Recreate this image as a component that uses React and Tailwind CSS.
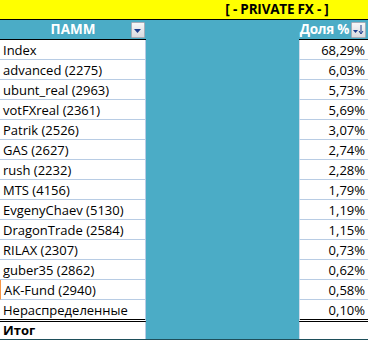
import React from 'react';

const rows = [
  ['Index', '68,29%'],
  ['advanced (2275)', '6,03%'],
  ['ubunt_real (2963)', '5,73%'],
  ['votFXreal (2361)', '5,69%'],
  ['Patrik (2526)', '3,07%'],
  ['GAS (2627)', '2,74%'],
  ['rush (2232)', '2,28%'],
  ['MTS (4156)', '1,79%'],
  ['EvgenyChaev (5130)', '1,19%'],
  ['DragonTrade (2584)', '1,15%'],
  ['RILAX (2307)', '0,73%'],
  ['guber35 (2862)', '0,62%'],
  ['AK-Fund (2940)', '0,58%'],
];

function FilterButton() {
  return (
    <div className="absolute right-[1px] top-[2px] w-[14px] h-[16px] border border-[#a7adb8] rounded-[1px] bg-gradient-to-b from-[#f7f7f7] to-[#d9dbe0] flex items-center justify-center">
      <svg width="8" height="5" viewBox="0 0 8 5" className="mt-[2px]">
        <path d="M0 0h7L3.5 4z" fill="#1c3c8c" />
      </svg>
    </div>
  );
}

function SortButton() {
  return (
    <div className="absolute right-[2px] top-[2px] w-[15px] h-[16px] border border-[#a7adb8] rounded-[1px] bg-gradient-to-b from-[#f7f7f7] to-[#d9dbe0] flex items-center justify-center">
      <svg width="11" height="10" viewBox="0 0 11 10">
        <path d="M0 5h5L2.5 8z" fill="#1c3c8c" />
        <path d="M8 0v8" stroke="#1c3c8c" strokeWidth="1" />
        <path d="M6 6l2 3 2-3" stroke="#1c3c8c" strokeWidth="1" fill="none" />
      </svg>
    </div>
  );
}

function Row({ name, value, last, orange }) {
  const bottom = last
    ? 'border-b-[3px] border-b-black border-double'
    : 'border-b border-b-[#b8cce4]';
  return (
    <div className={`flex ${last ? 'h-[22px]' : 'h-[20px]'}`}>
      <div
        className={`w-[146px] bg-white border-r border-[#b8cce4] pl-[3px] leading-[19px] pt-[1px] whitespace-nowrap ${bottom} ${
          orange ? 'border-l border-l-[#f79646]' : ''
        }`}
      >
        {name}
      </div>
      <div className="w-[153px] bg-[#4bacc6]" />
      <div
        className={`flex-1 bg-white border-l border-[#d0dcea] pr-[3px] text-right leading-[19px] pt-[1px] ${bottom}`}
      >
        {value}
      </div>
    </div>
  );
}

export default function App() {
  return (
    <div
      className="w-[368px] h-[340px] overflow-hidden bg-white text-black text-[13px]"
      style={{ fontFamily: '"Open Sans", "Liberation Sans", sans-serif' }}
    >
      <div className="h-[20px] bg-[#ffff00] border-b border-black flex">
        <div className="ml-[186px] flex-1 text-center font-bold text-[13.5px] leading-[19px] tracking-[-0.2px]">
          [ - PRIVATE FX - ]
        </div>
      </div>

      <div className="flex h-[20px] text-white font-bold text-[13.5px]">
        <div className="relative w-[146px] bg-[#4bacc6] border-b border-black text-center leading-[19px]">
          ПАММ
          <FilterButton />
        </div>
        <div className="w-[153px] bg-[#4bacc6]" />
        <div className="relative flex-1 bg-[#4bacc6] border-b border-black leading-[19px] text-right pr-[19px] whitespace-nowrap tracking-[-0.3px]">
          Доля %
          <SortButton />
        </div>
      </div>

      {rows.map(([n, v], i) => (
        <Row key={n} name={n} value={v} orange={i === rows.length - 1} />
      ))}
      <Row name="Нераспределенные" value="0,10%" last />

      <div className="flex h-[18px] border-b border-[#1e4e5a]">
        <div className="w-[146px] bg-white border-r border-[#b8cce4] pl-[3px] font-bold leading-[17px]">
          Итог
        </div>
        <div className="w-[153px] bg-[#4bacc6]" />
        <div className="flex-1 bg-white border-l border-[#d0dcea]" />
      </div>
    </div>
  );
}
